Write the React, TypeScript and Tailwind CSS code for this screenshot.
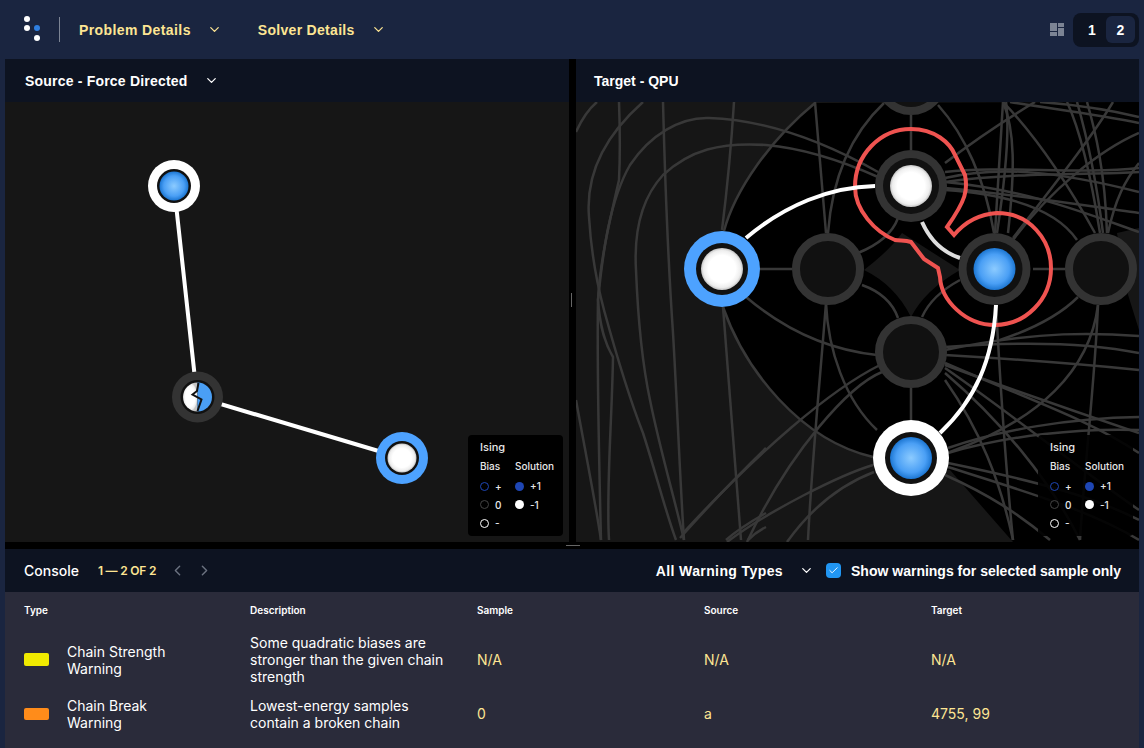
import React from 'react';
import { Check, ChevronDown, ChevronLeft, ChevronRight } from 'lucide-react';

// gray background edges of the QPU graph, in screen coordinates
const targetEdges = [
  'M576 132 Q585 112 597 102',
  'M643 102 C600 140 586 180 589 217 C591 250 596 280 604 310 C615 350 630 400 643 433 C655 470 665 510 676 540',
  'M619 102 C620 130 620 160 619 180 C610 220 600 260 598 300 C597 360 599 460 601 540',
  'M878 172 C830 145 770 120 709 118 C680 117 650 135 630 165 C610 200 603 250 598 300 C600 330 606 345 613 357 C612 420 606 490 609 540',
  'M878 177 C840 160 800 148 766 145 C720 142 690 150 663 175 C640 200 634 235 636 270 C638 320 643 367 650 400 C660 450 675 500 684 540',
  'M663 102 C665 180 668 260 673 333 C677 400 680 480 684 540',
  'M734 102 C731 150 727 190 722 230',
  'M723 307 C730 390 736 470 741 540',
  'M576 400 C585 450 595 500 601 540',
  'M766 448 C735 478 705 510 680 538',
  'M766 513 C750 522 735 532 726 540',
  'M766 527 C758 531 752 536 748 540',
  'M724 231 C735 190 770 140 815 103',
  'M723 307 C745 370 800 440 873 457',
  'M911 115 L911 150',
  'M760 269 L792 269',
  'M858 253 Q890 240 898 218',
  'M862 285 Q890 295 898 318',
  'M960 280 Q932 295 922 317',
  'M826 233 L815 102',
  'M828 233 C832 180 850 135 884 103',
  'M938 105 C965 135 985 180 994 233',
  'M746 297 C785 330 830 350 877 355',
  'M826 303 C828 350 845 400 877 430',
  'M826 303 C820 380 812 460 808 540',
  'M911 388 L911 420',
  'M880 365 C830 390 760 450 683 533',
  'M882 372 C850 385 790 450 747 542',
  'M873 465 C840 475 770 510 727 542',
  'M874 472 C840 485 810 510 787 542',
  'M945 172 C1000 165 1080 175 1139 168',
  'M945 178 C1000 165 1060 172 1139 192',
  'M945 182 C1020 172 1090 175 1139 172',
  'M945 188 C1020 195 1080 205 1139 213',
  'M945 190 C1020 195 1060 215 1077 240',
  'M945 182 C1030 190 1090 215 1139 232',
  'M945 163 C975 140 1005 120 1035 102',
  'M995 233 L1003 102',
  'M997 233 C1005 180 1010 130 1006 102',
  'M1008 233 C1015 170 1015 130 1003 102',
  'M1013 238 C1050 190 1090 140 1113 102',
  'M1003 102 C1030 130 1060 170 1095 233',
  'M1013 240 C1050 190 1100 150 1139 133',
  'M1100 233 C1090 170 1080 130 1067 102',
  'M1103 233 C1095 170 1085 130 1077 102',
  'M1107 233 C1105 170 1095 130 1087 102',
  'M1108 233 C1115 200 1125 180 1139 163',
  'M1010 102 C1060 110 1100 115 1139 123',
  'M1040 102 C1080 105 1110 110 1139 117',
  'M1033 269 L1065 269',
  'M945 350 C1040 330 1100 333 1139 336',
  'M945 347 C1040 340 1100 345 1139 353',
  'M945 355 C1030 360 1090 365 1139 370',
  'M945 363 C1030 400 1090 420 1139 453',
  'M945 365 C1040 400 1100 420 1139 433',
  'M945 368 C1020 420 1080 470 1139 510',
  'M945 373 C1000 420 1050 480 1080 540',
  'M945 380 C980 430 1000 480 1013 540',
  'M996 305 C1000 380 1005 460 1013 540',
  'M1098 305 C1090 370 1040 420 950 452',
  'M1078 297 C1060 315 1030 330 1000 340',
  'M1098 305 C1095 380 1085 460 1080 540',
  'M948 448 C1000 430 1070 418 1139 417',
  'M948 453 C1010 435 1080 428 1139 430',
  'M948 463 C1030 480 1090 495 1139 520',
  'M948 467 C1020 490 1090 510 1139 540',
  'M945 475 C990 495 1020 515 1050 540',
];

const Gradients = ({ id }: { id: string }) => (
  <defs>
    <radialGradient id={`${id}-white`}>
      <stop offset="0.65" stopColor="#ffffff" />
      <stop offset="0.88" stopColor="#eeeeee" />
      <stop offset="1" stopColor="#c4c4c4" />
    </radialGradient>
    <radialGradient id={`${id}-blue`}>
      <stop offset="0" stopColor="#8ccbff" />
      <stop offset="0.7" stopColor="#4a9ff5" />
      <stop offset="1" stopColor="#1c76d2" />
    </radialGradient>
  </defs>
);

const EmptyNode = ({ x, y }: { x: number; y: number }) => (
  <circle cx={x} cy={y} r={32} fill="#111111" stroke="#333333" strokeWidth={8} />
);

const SolvedNode = ({ x, y, ring, inner, fill, scale = 1 }: { x: number; y: number; ring: string; inner: number; fill: string; scale?: number }) => (
  <g>
    <circle cx={x} cy={y} r={38 * scale} fill={ring} />
    <circle cx={x} cy={y} r={inner * scale} fill="#111111" />
    <circle cx={x} cy={y} r={21 * scale} fill={fill} />
  </g>
);

const SourceGraph = () => (
  <svg viewBox="5 102 564 440" className="block h-full w-full">
    <Gradients id="src" />
    <path d="M174 186 L197 397 L402 458" fill="none" stroke="#ffffff" strokeWidth={4} />
    <circle cx={174} cy={186} r={26} fill="#ffffff" />
    <circle cx={174} cy={186} r={17} fill="#111111" />
    <circle cx={174} cy={186} r={14.5} fill="url(#src-blue)" />
    <circle cx={402} cy={458} r={26} fill="#4da2ff" />
    <circle cx={402} cy={458} r={17} fill="#111111" />
    <circle cx={402} cy={458} r={14.5} fill="url(#src-white)" />
    <circle cx={197.5} cy={397} r={25.5} fill="#333333" />
    <circle cx={197.5} cy={397} r={17} fill="#111111" />
    <path d="M197.5 382.5 A14.5 14.5 0 0 0 197.5 411.5 Z" fill="url(#src-white)" />
    <path d="M197.5 382.5 A14.5 14.5 0 0 1 197.5 411.5 Z" fill="#4a9ff5" />
    <path d="M198.5 383 L197 391 L192.5 394.5 L201.5 399.5 L197.5 411" fill="none" stroke="#111111" strokeWidth={2} />
  </svg>
);

const TargetGraph = () => (
  <svg viewBox="576 102 563 440" className="block h-full w-full">
    <Gradients id="tgt" />
    <path
      d="M724 231 C735 190 770 140 815 103 L1139 102 L1139 228 L1117 233 L1125 285 L1139 330 L1139 542 L1013 542 L950 470 L873 457 C800 440 745 370 723 307 Z"
      fill="#000000"
    />
    <path d="M864 270 Q890 250 902 233 L960 270 Q925 290 911 317 Q895 285 864 270 Z" fill="#161616" />
    {targetEdges.map((d) => (
      <path key={d} d={d} fill="none" stroke="#383838" strokeWidth={2.5} />
    ))}
    <path
      d="M947 227 L954 235 C965 222 980 214 997 213 C1030 213 1051 240 1051 268 C1051 300 1025 325 995 325 C965 325 941 300 940 277 L938 268 L924 259 L911 242 C905 240 900 241 895 240 C875 232 855 210 855 187 C855 155 880 129 911 129 C935 129 950 143 955 155 L965 175 C968 190 966 200 947 227 Z"
      fill="none"
      stroke="#ef5350"
      strokeWidth={4}
    />
    <path d="M922 222 C930 240 942 252 960 258" fill="none" stroke="#dddddd" strokeWidth={4} />
    <path d="M746 238 C785 205 830 187 875 186" fill="none" stroke="#ffffff" strokeWidth={4} />
    <path d="M996 305 C993 360 975 400 940 433" fill="none" stroke="#ffffff" strokeWidth={4} />
    <EmptyNode x={911} y={79} />
    <EmptyNode x={828} y={269} />
    <EmptyNode x={1101} y={269} />
    <EmptyNode x={911} y={352} />
    <circle cx={911} cy={186} r={36} fill="#333333" />
    <circle cx={911} cy={186} r={28} fill="#111111" />
    <circle cx={911} cy={186} r={21} fill="url(#tgt-white)" />
    <circle cx={994.5} cy={269} r={36} fill="#333333" />
    <circle cx={994.5} cy={269} r={28} fill="#111111" />
    <circle cx={994.5} cy={269} r={21} fill="url(#tgt-blue)" />
    <SolvedNode x={722} y={269} ring="#4da2ff" inner={26} fill="url(#tgt-white)" />
    <SolvedNode x={911} y={458} ring="#ffffff" inner={26} fill="url(#tgt-blue)" />
  </svg>
);

const Legend = ({ className }: { className: string }) => (
  <div className={`absolute top-[333px] h-[101px] w-[95px] rounded pl-3 pt-[6px] font-['Inter',sans-serif] text-[10px] font-medium leading-[12px] text-[#e8e8e8] ${className}`}>
    <div className="mb-[7px] text-[11px]">Ising</div>
    <div className="mb-[5px] flex">
      <span className="w-[35px]">Bias</span>
      <span>Solution</span>
    </div>
    <div className="flex h-[18.5px] items-center">
      <span className="h-[9px] w-[9px] rounded-full border border-[#1e46b4]" />
      <span className="ml-[6px] w-[20px]">+</span>
      <span className="h-[9px] w-[9px] rounded-full bg-[#1e46b4]" />
      <span className="ml-[6px]">+1</span>
    </div>
    <div className="flex h-[18.5px] items-center">
      <span className="h-[9px] w-[9px] rounded-full border border-[#444444]" />
      <span className="ml-[6px] w-[20px]">0</span>
      <span className="h-[9px] w-[9px] rounded-full bg-white" />
      <span className="ml-[6px]">-1</span>
    </div>
    <div className="flex h-[18.5px] items-center">
      <span className="h-[9px] w-[9px] rounded-full border border-white" />
      <span className="ml-[6px]">-</span>
    </div>
  </div>
);

const warnings = [
  {
    swatch: 'bg-[#f0ea00] h-[13px]',
    type: 'Chain Strength Warning',
    description: 'Some quadratic biases are stronger than the given chain strength',
    sample: 'N/A',
    source: 'N/A',
    target: 'N/A',
    rowClass: 'h-[63px]',
  },
  {
    swatch: 'bg-[#ff8c1a] h-[12px]',
    type: 'Chain Break Warning',
    description: 'Lowest-energy samples contain a broken chain',
    sample: '0',
    source: 'a',
    target: '4755, 99',
    rowClass: 'h-[45px]',
  },
];

const App = () => {
  return (
    <div className="relative flex h-[748px] w-[1144px] flex-col overflow-hidden bg-[#1a2540] font-['Liberation_Sans',sans-serif]">
      {/* Top bar */}
      <header className="flex h-[59px] shrink-0 items-center pl-[24px] pr-[5px]">
        <svg width="18" height="26" viewBox="0 0 18 26" className="mt-[-1px]">
          <circle cx="3" cy="3" r="3" fill="#ffffff" />
          <circle cx="3" cy="12" r="3" fill="#ffffff" />
          <circle cx="13" cy="12" r="3" fill="#2f7fe0" />
          <circle cx="13" cy="22" r="3" fill="#ffffff" />
        </svg>
        <div className="ml-[17px] h-[25px] w-px bg-[#7c8494]" />
        <span className="ml-[19px] text-sm font-bold tracking-[0.4px] text-[#fde593]">Problem Details</span>
        <ChevronDown size={15} strokeWidth={2} className="ml-[16px] text-[#fde593]" />
        <span className="ml-[36px] text-sm font-bold tracking-[0.3px] text-[#fde593]">Solver Details</span>
        <ChevronDown size={15} strokeWidth={2} className="ml-[16px] text-[#fde593]" />
        <svg width="14" height="13" viewBox="0 0 14 13" className="ml-auto mr-[9px]">
          <path d="M0 0H7V8H0ZM0 9H7V13H0ZM8 0H14V4H8ZM8 5H14V13H8Z" fill="#7c8494" />
        </svg>
        <div className="flex h-[34px] w-[66px] items-center rounded-lg bg-[#0d1321] pl-[5px] text-sm font-bold text-white">
          <span className="flex h-[27px] w-[28px] items-center justify-center">1</span>
          <span className="flex h-[27px] w-[29px] items-center justify-center rounded-md bg-[#1a2540]">2</span>
        </div>
      </header>

      <main className="flex flex-1 flex-col px-[5px]">
        {/* Graph panels */}
        <div className="relative flex h-[483px] shrink-0 bg-black">
          <section className="w-[564px] shrink-0">
            <div className="flex h-[43px] items-center bg-[#0d1321] pl-[20px] text-sm font-bold tracking-[0.2px] text-white">
              Source - Force Directed
              <ChevronDown size={15} strokeWidth={2} className="ml-[16px]" />
            </div>
            <div className="relative h-[440px] bg-[#161616]">
              <SourceGraph />
              <Legend className="left-[463px] bg-black" />
            </div>
          </section>
          <section className="ml-[7px] flex-1">
            <div className="flex h-[43px] items-center bg-[#0d1321] pl-[18px] text-sm font-bold text-white">Target - QPU</div>
            <div className="relative h-[440px] bg-[#161616]">
              <TargetGraph />
              <Legend className="left-[462px] bg-black/90" />
            </div>
          </section>
          <div className="absolute left-[566px] top-[234px] h-[14px] w-px bg-[#666666]" />
        </div>

        {/* Console */}
        <div className="relative h-[7px] shrink-0 bg-black">
          <div className="absolute left-[561px] top-[3px] h-px w-[14px] bg-[#666666]" />
        </div>
        <section className="flex flex-1 flex-col font-['Inter',sans-serif]">
          <div className="flex h-[43px] shrink-0 items-center bg-[#0d1321] pl-[19px] pr-[18px] text-white">
            <span className="text-sm font-medium">Console</span>
            <span className="ml-[19px] text-xs font-semibold tracking-[-0.2px] text-[#fde593]">1 — 2 OF 2</span>
            <ChevronLeft size={17} className="ml-[13px] text-[#6b7280]" />
            <ChevronRight size={17} className="ml-[10px] text-[#6b7280]" />
            <span className="ml-auto font-['Liberation_Sans',sans-serif] text-sm font-bold tracking-[0.4px]">All Warning Types</span>
            <ChevronDown size={15} strokeWidth={2} className="ml-[16px]" />
            <span className="ml-[12px] flex h-[15px] w-[15px] items-center justify-center rounded-sm bg-[#2196f3]">
              <Check size={11} strokeWidth={2} />
            </span>
            <span className="ml-[10px] font-['Liberation_Sans',sans-serif] text-sm font-bold">Show warnings for selected sample only</span>
          </div>
          <div className="flex-1 bg-[#2a2b3a] pl-[19px] text-sm leading-[17px] text-white">
            <div className="grid h-[36px] grid-cols-[226px_227px_227px_227px_1fr] items-center pt-[1px] text-[10px] font-semibold">
              <span>Type</span>
              <span>Description</span>
              <span>Sample</span>
              <span>Source</span>
              <span>Target</span>
            </div>
            {warnings.map((w) => (
              <div key={w.type} className={`grid grid-cols-[226px_227px_227px_227px_1fr] items-center ${w.rowClass}`}>
                <div className="flex items-center">
                  <span className={`w-[25px] shrink-0 rounded-[2px] ${w.swatch}`} />
                  <span className="ml-[18px] w-[120px]">{w.type}</span>
                </div>
                <span className="w-[195px]">{w.description}</span>
                <span className="text-[#fde593]">{w.sample}</span>
                <span className="text-[#fde593]">{w.source}</span>
                <span className="text-[#fde593]">{w.target}</span>
              </div>
            ))}
          </div>
        </section>
      </main>
    </div>
  );
};

export default App;
